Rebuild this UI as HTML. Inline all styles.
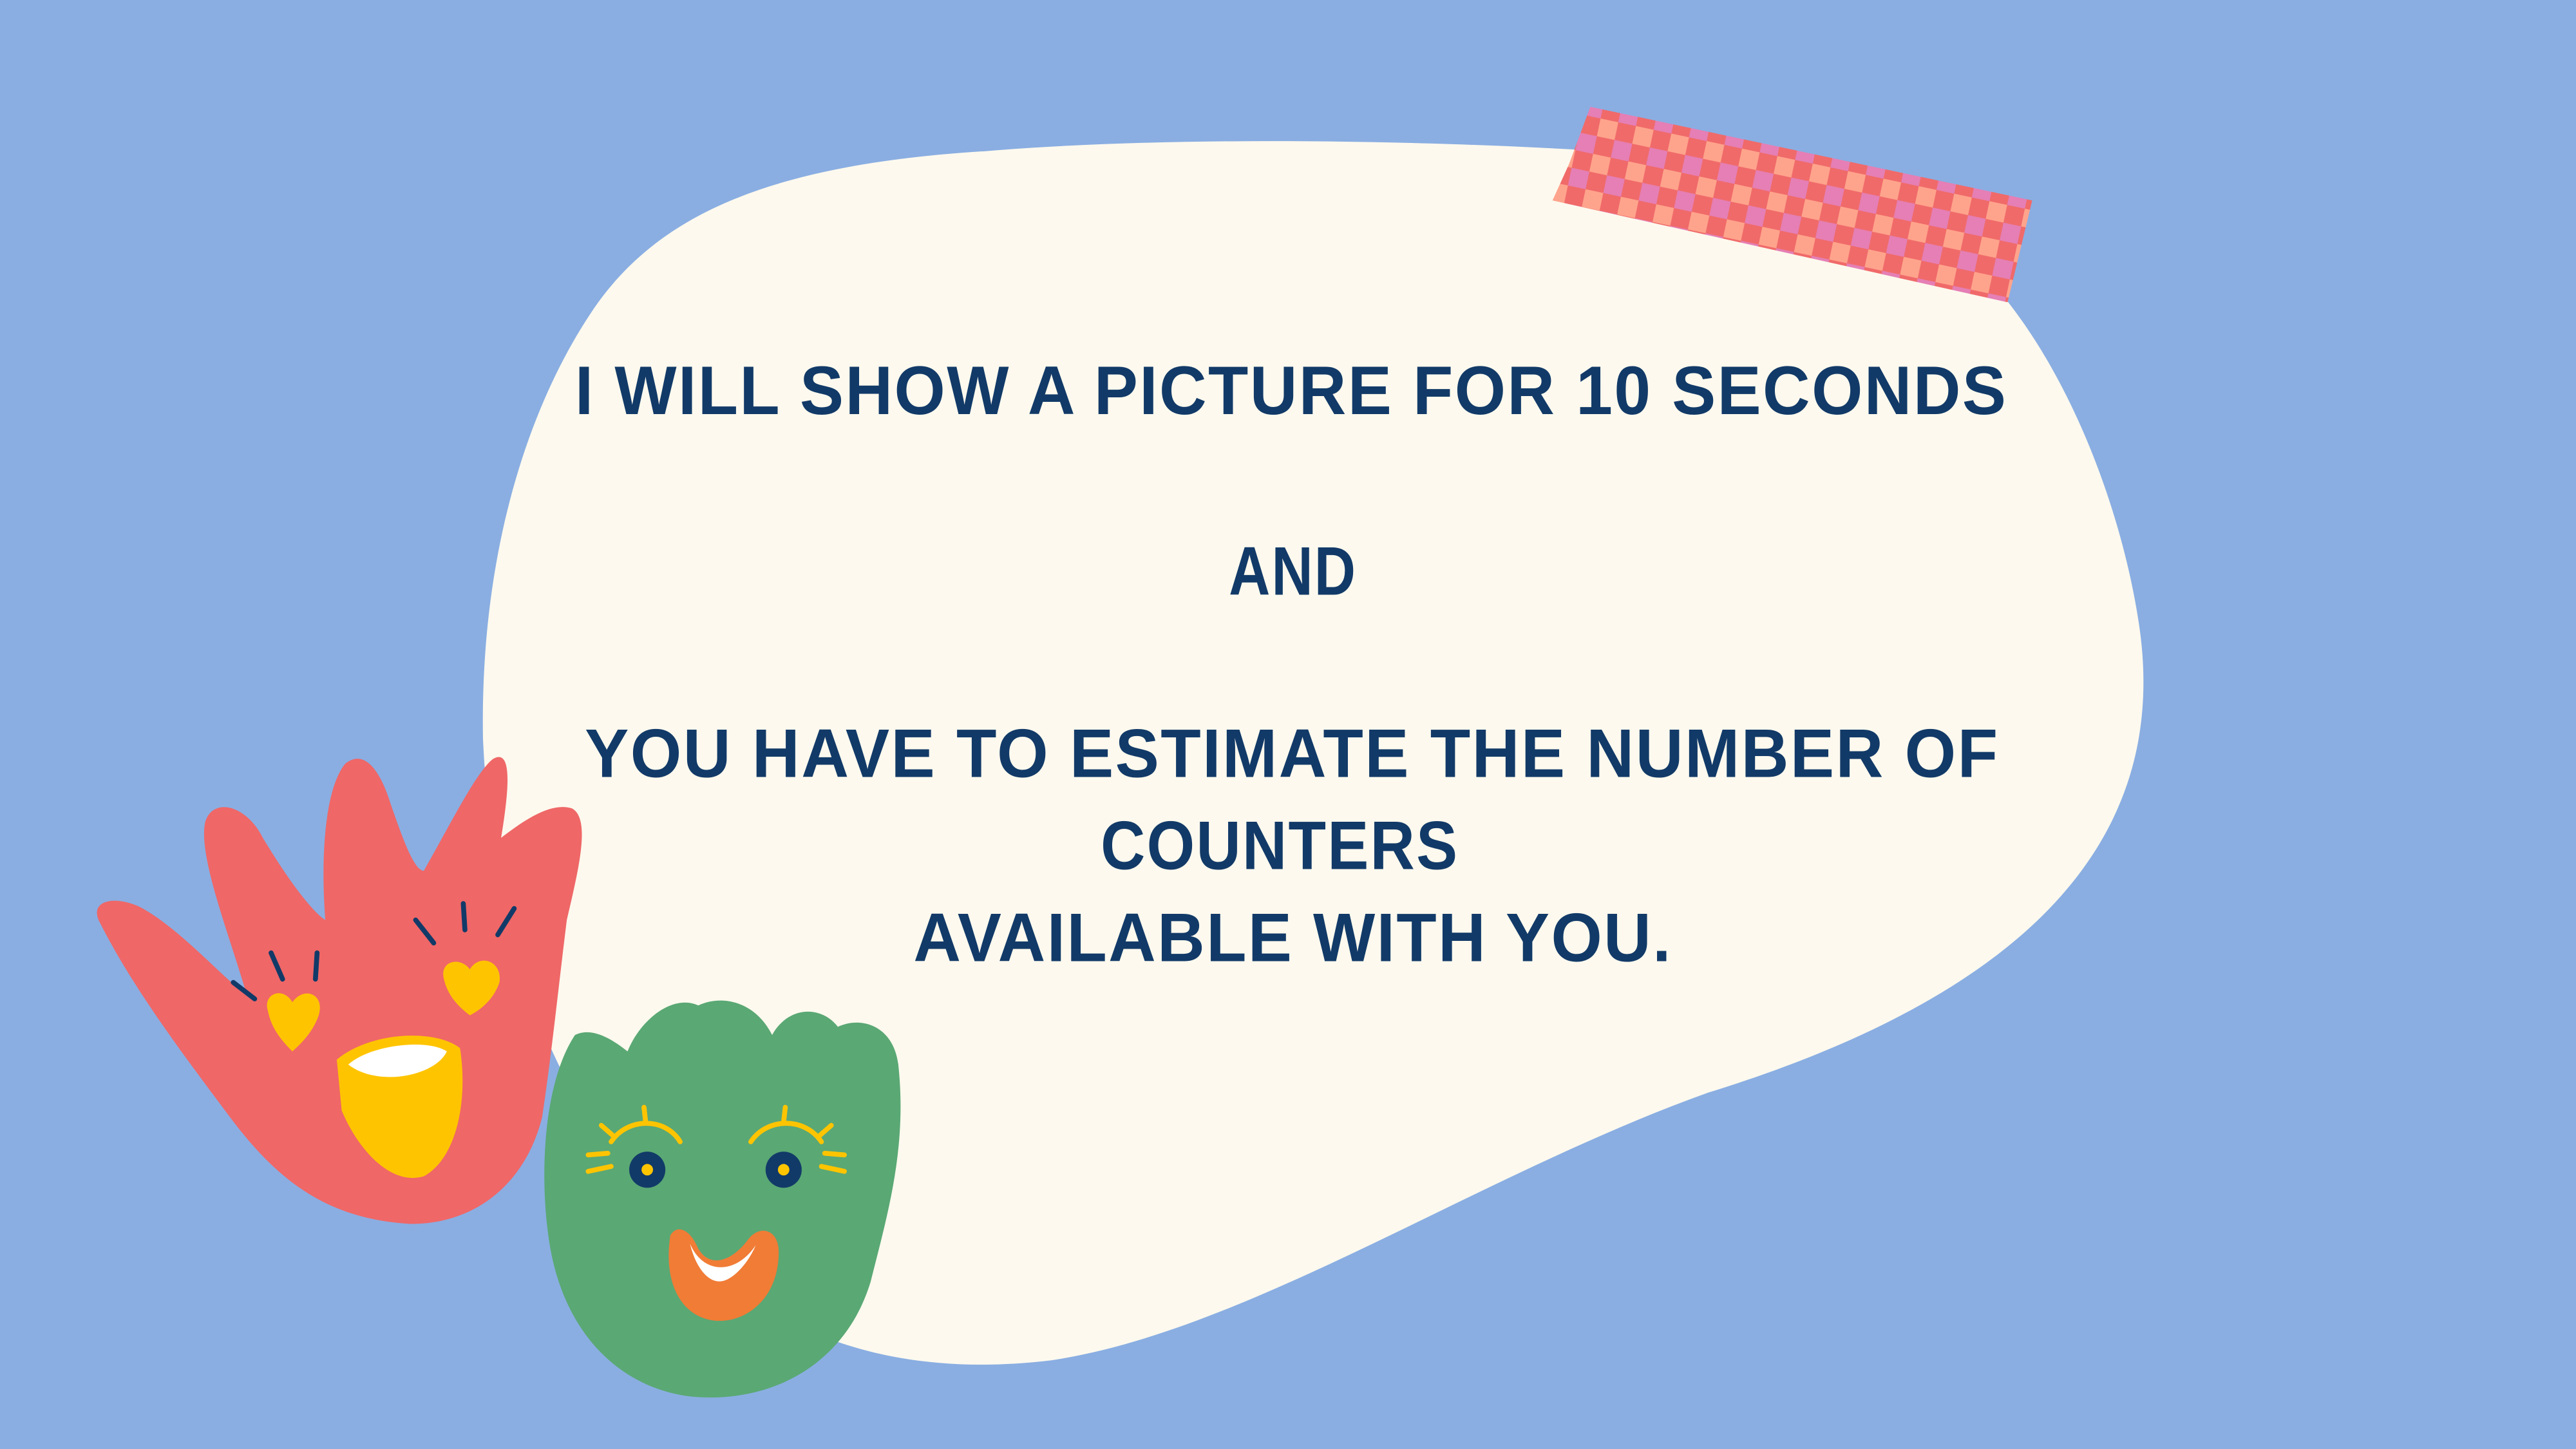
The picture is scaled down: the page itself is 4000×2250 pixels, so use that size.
<!DOCTYPE html>
<html><head><meta charset="utf-8"><style>
html,body{margin:0;padding:0;background:#8aaee2;}
svg{display:block;}
text{font-family:"Liberation Sans",sans-serif;font-weight:bold;fill:#123a68;letter-spacing:1px;}
</style></head><body>
<svg width="4000" height="2250" viewBox="0 0 1568 882" xmlns="http://www.w3.org/2000/svg">
<defs>
<pattern id="chk" width="22" height="22" patternUnits="userSpaceOnUse" patternTransform="rotate(12)">
<rect width="22" height="22" fill="#f06a6a"/>
<rect width="11" height="11" fill="#ffa48c"/>
<rect x="11" y="11" width="11" height="11" fill="#e57fb5"/>
</pattern>
</defs>
<rect width="1568" height="882" fill="#8aaee2"/>
<path d="M600,92 C720,82 880,86 975,92 L1190,150 C1250,200 1290,300 1302,380 C1320,500 1250,600 1040,665 C900,715 760,810 640,828 C540,840 470,810 420,760 C340,680 300,580 294,450 C292,340 320,250 360,190 C400,130 470,100 600,92 Z" fill="#fdf9ee"/>
<path d="M968,65 L1237,122 L1222,184 L945,122 L955,100 Z" fill="url(#chk)"/>
<g font-size="42">
<text x="350" y="252" textLength="872" lengthAdjust="spacingAndGlyphs">I WILL SHOW A PICTURE FOR 10 SECONDS</text>
<text x="748" y="362" textLength="78" lengthAdjust="spacingAndGlyphs">AND</text>
<text x="356" y="473" textLength="861" lengthAdjust="spacingAndGlyphs">YOU HAVE TO ESTIMATE THE NUMBER OF</text>
<text x="670" y="529" textLength="218" lengthAdjust="spacingAndGlyphs">COUNTERS</text>
<text x="556" y="585" textLength="462" lengthAdjust="spacingAndGlyphs">AVAILABLE WITH YOU.</text>
</g>
<path d="M60,560 C55,548 70,545 85,552 C110,565 140,600 150,605 C140,570 120,520 125,500 C130,485 150,490 160,510 C175,535 190,555 198,560 C195,520 198,480 210,465 C222,455 232,470 238,490 C245,510 252,530 258,530 C275,500 290,470 300,462 C312,455 310,480 305,510 C318,500 335,488 348,492 C360,498 352,530 345,560 C340,600 336,640 330,680 C320,720 290,745 250,745 C200,742 170,720 140,680 C110,640 80,600 60,560 Z" fill="#ef6767"/>
<path d="M163,615 C160,605 172,600 178,610 C185,600 198,605 194,618 C190,630 180,638 178,640 C170,632 165,625 163,615 Z" fill="#ffc400"/>
<path d="M270,595 C268,585 280,582 286,590 C292,580 306,585 304,598 C300,610 290,616 286,618 C278,612 272,605 270,595 Z" fill="#ffc400"/>
<g stroke="#123a68" stroke-width="3" stroke-linecap="round">
<line x1="142" y1="598" x2="155" y2="608"/><line x1="165" y1="580" x2="172" y2="596"/><line x1="193" y1="580" x2="192" y2="596"/>
<line x1="253" y1="560" x2="264" y2="574"/><line x1="282" y1="550" x2="283" y2="566"/><line x1="313" y1="553" x2="303" y2="569"/>
</g>
<path d="M205,645 C225,628 265,626 280,638 C285,670 278,705 258,716 C238,722 218,700 208,676 Z" fill="#ffc400"/>
<path d="M212,648 C225,636 260,632 272,640 C265,655 230,662 212,648 Z" fill="#fff"/>
<path d="M350,630 C360,625 372,632 382,640 C390,620 410,605 425,612 C440,605 460,610 470,630 C480,612 500,612 510,625 C525,618 545,625 547,650 C552,700 540,740 530,780 C515,830 470,855 420,850 C380,845 345,815 335,760 C328,720 330,660 350,630 Z" fill="#5aa874"/>
<g fill="none" stroke="#ffc400" stroke-width="3" stroke-linecap="round">
<path d="M372,695 C382,680 405,680 414,695"/><path d="M457,695 C467,680 490,680 500,695"/>
<line x1="358" y1="703" x2="370" y2="702"/><line x1="358" y1="713" x2="372" y2="710"/><line x1="366" y1="685" x2="374" y2="692"/><line x1="392" y1="674" x2="393" y2="683"/>
<line x1="502" y1="702" x2="514" y2="703"/><line x1="500" y1="710" x2="514" y2="713"/><line x1="506" y1="685" x2="498" y2="692"/><line x1="478" y1="674" x2="477" y2="683"/>
</g>
<circle cx="394" cy="712" r="11" fill="#123a68"/><circle cx="394" cy="712" r="3.5" fill="#ffc400"/>
<circle cx="477" cy="712" r="11" fill="#123a68"/><circle cx="477" cy="712" r="3.5" fill="#ffc400"/>
<path d="M408,752 C412,745 420,748 425,760 C432,772 445,768 455,755 C462,745 474,748 474,762 C474,790 455,804 438,804 C418,804 403,785 408,752 Z" fill="#f07c36"/>
<path d="M420,757 C428,776 448,776 460,758 C455,770 445,780 438,780 C430,780 423,770 420,757 Z" fill="#fff"/>
</svg>
</body></html>
